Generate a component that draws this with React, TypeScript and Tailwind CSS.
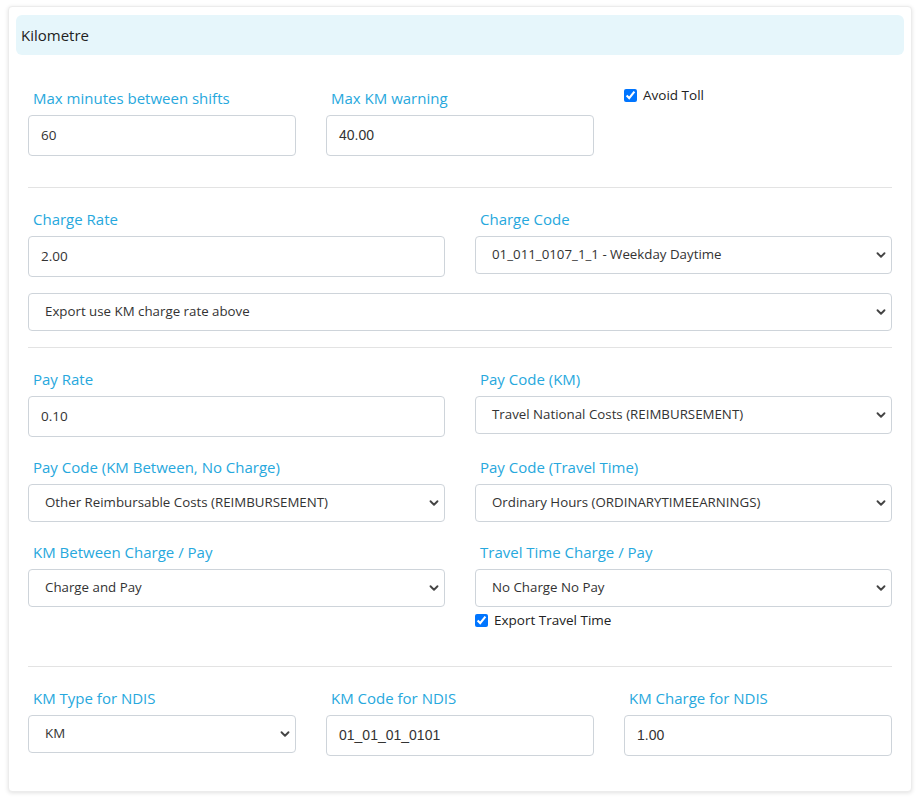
import { ChevronDown } from "lucide-react";

const FONT = "font-['Segoe_UI','Open_Sans','Noto_Sans',sans-serif]";

function Label({ children }: { children: React.ReactNode }) {
  return <div className="pl-[5px] text-[15px] leading-[22px] text-[#27a8dd] mb-[6px]">{children}</div>;
}

function TextInput({ value, arial }: { value: string; arial?: boolean }) {
  return (
    <div
      className={
        "h-[41px] w-full rounded-[4px] border border-[#ced4da] bg-white px-[12px] flex items-center text-[13.5px] text-[#333] " +
        (arial ? "font-['Liberation_Sans',Arial,sans-serif] text-[14px]" : "")
      }
    >
      {value}
    </div>
  );
}

function Select({ value }: { value: string }) {
  return (
    <div className="h-[38px] w-full rounded-[4px] border border-[#ced4da] bg-white pl-[16px] pr-[3px] flex items-center justify-between text-[13.3px] text-[#333]">
      <span>{value}</span>
      <ChevronDown size={14} strokeWidth={3.2} className="text-[#444]" />
    </div>
  );
}

function Check({ label }: { label: string }) {
  return (
    <label className="flex items-center gap-[6px] text-[13.5px] text-[#222]">
      <input type="checkbox" defaultChecked className="w-[13px] h-[13px] accent-[#0075ff] m-0" />
      {label}
    </label>
  );
}

function Divider() {
  return <div className="h-px bg-[#e3e3e3]" />;
}

export default function App() {
  return (
    <div className={`min-h-screen bg-white pt-[6px] pl-[8px] pr-[11px] ${FONT}`}>
      <div className="rounded-[4px] border border-[#ececec] shadow-[0_1px_4px_rgba(0,0,0,0.12)] bg-white pt-[8px] pb-[35px]">
        <div className="mx-[7px] h-[40px] rounded-[6px] bg-[#e6f6fb] flex items-center pl-[5px] text-[15px] text-[#222]">
          Kilometre
        </div>

        <div className="px-[19px]">
          {/* Row 1 */}
          <div className="grid grid-cols-3 gap-x-[30px] pt-[32px] pb-[31px]">
            <div>
              <Label>Max minutes between shifts</Label>
              <TextInput value="60" />
            </div>
            <div>
              <Label>Max KM warning</Label>
              <TextInput value="40.00" arial />
            </div>
            <div className="-mt-[2px]">
              <Check label="Avoid Toll" />
            </div>
          </div>
          <Divider />

          {/* Charge */}
          <div className="pt-[20px] pb-[16px] flex flex-col gap-[16px]">
            <div className="grid grid-cols-2 gap-x-[30px]">
              <div>
                <Label>Charge Rate</Label>
                <TextInput value="2.00" />
              </div>
              <div>
                <Label>Charge Code</Label>
                <Select value="01_011_0107_1_1 - Weekday Daytime" />
              </div>
            </div>
            <Select value="Export use KM charge rate above" />
          </div>
          <Divider />

          {/* Pay */}
          <div className="pt-[20px] pb-[36px] grid grid-cols-2 gap-x-[30px] gap-y-[19px]">
            <div>
              <Label>Pay Rate</Label>
              <TextInput value="0.10" />
            </div>
            <div>
              <Label>Pay Code (KM)</Label>
              <Select value="Travel National Costs (REIMBURSEMENT)" />
            </div>
            <div>
              <Label>Pay Code (KM Between, No Charge)</Label>
              <Select value="Other Reimbursable Costs (REIMBURSEMENT)" />
            </div>
            <div>
              <Label>Pay Code (Travel Time)</Label>
              <Select value="Ordinary Hours (ORDINARYTIMEEARNINGS)" />
            </div>
            <div>
              <Label>KM Between Charge / Pay</Label>
              <Select value="Charge and Pay" />
            </div>
            <div>
              <Label>Travel Time Charge / Pay</Label>
              <Select value="No Charge No Pay" />
              <div className="mt-[3px]">
                <Check label="Export Travel Time" />
              </div>
            </div>
          </div>
          <Divider />

          {/* NDIS */}
          <div className="pt-[20px] grid grid-cols-3 gap-x-[30px]">
            <div>
              <Label>KM Type for NDIS</Label>
              <Select value="KM" />
            </div>
            <div>
              <Label>KM Code for NDIS</Label>
              <TextInput value="01_01_01_0101" arial />
            </div>
            <div>
              <Label>KM Charge for NDIS</Label>
              <TextInput value="1.00" arial />
            </div>
          </div>
        </div>
      </div>
    </div>
  );
}
